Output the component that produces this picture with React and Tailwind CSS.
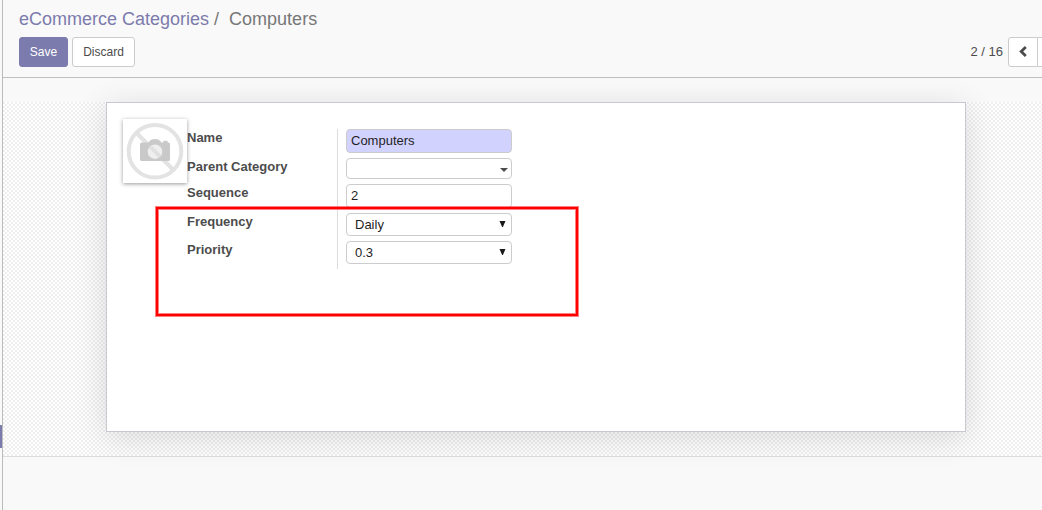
import React from "react";

function Placeholder() {
  return (
    <svg viewBox="0 0 64 64" className="block h-16 w-16">
      <circle cx="32" cy="32.300" r="26.300" fill="none" stroke="#e3e3e3" strokeWidth="4" />
      <path d="M13 13.500L50.500 51" stroke="#e3e3e3" strokeWidth="4" />
      <path
        fill="#c9c9c9"
        d="M18.500 23.500H25.500C27 21 29 20 32 20S37 21 38.500 23.500H40.300V22.600Q40.300 21.800 41.100 21.800H43.800Q44.600 21.800 44.600 22.600V23.500H45.500Q47 23.500 47 25V40.500Q47 42 45.500 42H18.500Q17 42 17 40.500V25Q17 23.500 18.500 23.500Z"
      />
      <circle cx="32" cy="32.700" r="7.300" fill="#efefef" />
      <path d="M27.200 27.700L37 37.500" stroke="#e0e0e0" strokeWidth="4" />
    </svg>
  );
}

function Label({ children, className }) {
  return (
    <div className={`text-[13px] leading-[18px] font-bold text-[#4c4c4c] ${className ?? ""}`}>
      {children}
    </div>
  );
}

function SelectBox({ value, className }) {
  return (
    <div
      className={`flex h-[23px] items-center justify-between rounded-[4px] border border-[#ccc] bg-white pr-[5px] pl-2 ${className}`}
    >
      <span>{value}</span>
      <svg viewBox="0 0 7 6" className="mb-[1px] h-[6px] w-[7px]">
        <path d="M0.500 0H6.500L3.900 6H3.100Z" fill="#1a1a1a" />
      </svg>
    </div>
  );
}

export default function App() {
  return (
    <div className="relative flex h-[510px] w-[1042px] overflow-hidden bg-[#f9f9f9] font-['Liberation_Sans',Arial,sans-serif] text-[13px] text-[#4c4c4c]">
      <aside className="w-[3px] shrink-0 border-r border-[#bbb] bg-[#f9f9f9] pt-[425px]">
        <div className="h-[23px] bg-[#7c7bad]" />
      </aside>

      <main className="flex w-[1039px] shrink-0 flex-col">
        <header className="h-[78px] shrink-0 border-b border-[#bfbfbf] pt-2 pl-4">
          <div className="flex h-[22px] items-center text-[18px] whitespace-pre text-[#777]">
            <a className="text-[#7c7bad]">eCommerce Categories</a>
            <span className="pl-[5px]">/</span>
            <span className="pl-[10px]">Computers</span>
          </div>
          <div className="mt-[7px] flex h-[30px] items-center">
            <button className="h-[30px] w-[49px] rounded-[3px] border border-[#7c7bad] bg-[#7c7bad] text-[12px] text-white">
              Save
            </button>
            <button className="ml-1 h-[30px] w-[63px] rounded-[3px] border border-[#ccc] bg-white text-[12px]">
              Discard
            </button>
            <span className="ml-auto pr-[5px]">2 / 16</span>
            <button className="flex h-[30px] w-[30px] items-center justify-center rounded-l-[3px] border border-[#ccc] bg-white">
              <svg viewBox="0 0 8 11" className="mb-[2px] h-[11px] w-2">
                <path d="M6.800 1L2.200 5.500L6.800 10" fill="none" stroke="#4c4c4c" strokeWidth="2.800" />
              </svg>
            </button>
            <div className="h-[30px] w-1 border-y border-[#ccc] bg-white" />
          </div>
        </header>

        <section className="mt-6 h-[355px] shrink-0 border-b border-[#ddd] bg-[repeating-conic-gradient(#ffffff_0_25%,#eeeeee_0_50%)] bg-[length:4px_4px] pl-[103px]">
          <div className="flex h-[330px] w-[860px] border border-[#c8c8d3] bg-white pt-4 pl-4 shadow-[0_5px_30px_rgba(0,0,0,0.13)]">
            <div className="h-16 w-16 shrink-0 bg-white shadow-[0_1px_4px_rgba(0,0,0,0.4)]">
              <Placeholder />
            </div>
            <div className="mt-[10px] h-[140px] w-[151px] border-r border-[#ddd]">
              <Label>Name</Label>
              <Label className="mt-[11px]">Parent Category</Label>
              <Label className="mt-2">Sequence</Label>
              <Label className="mt-[11px]">Frequency</Label>
              <Label className="mt-[10px]">Priority</Label>
            </div>
            <div className="mt-[10px] ml-2 w-[166px] text-[#1f1f1f]">
              <div className="flex h-6 items-center rounded-[4px] border border-[#ccc] bg-[#d2d2ff] pl-1">
                Computers
              </div>
              <div className="mt-[5px] flex h-[21px] items-center justify-end rounded-[4px] border border-[#ccc] bg-white pr-[3px]">
                <svg viewBox="0 0 8 4" className="mt-[3px] h-1 w-2">
                  <path d="M0 0H8L4 4Z" fill="#4c4c4c" />
                </svg>
              </div>
              <div className="mt-[5px] flex h-6 items-center rounded-[4px] border border-[#ccc] bg-white pl-1">
                2
              </div>
              <SelectBox value="Daily" className="mt-[5px]" />
              <SelectBox value="0.3" className="mt-[5px]" />
            </div>
          </div>
        </section>
      </main>

      <div className="absolute top-[207px] left-[156px] h-[109px] w-[422px] border-2 border-[#ff0000] shadow-[0_0_0_1px_rgba(255,0,0,0.5),inset_0_0_0_1px_rgba(255,0,0,0.5)]" />
    </div>
  );
}
